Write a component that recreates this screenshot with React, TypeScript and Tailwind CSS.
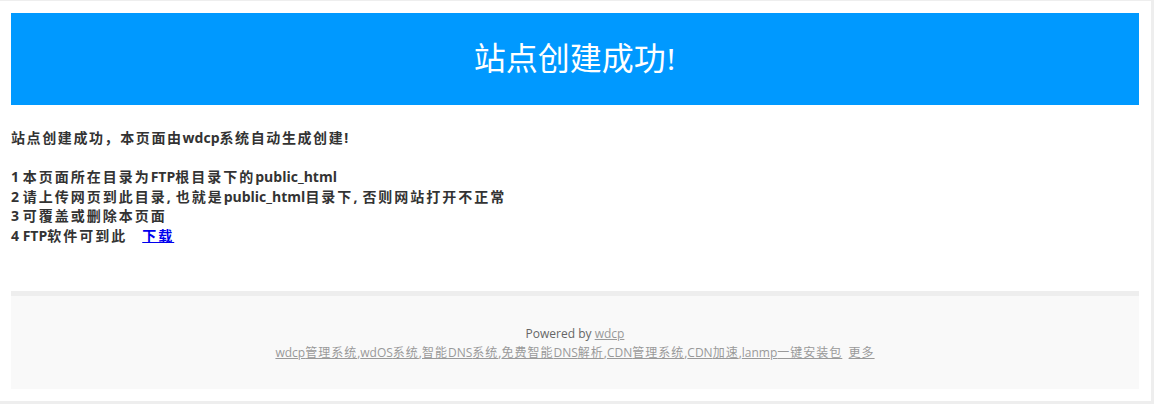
import React from "react";

const CJK_RE = /([\u3000-\u9fff\uff00-\uffef]+)/;
const CJK_TEST = /[\u3000-\u9fff\uff00-\uffef]/;

function Spaced({ text, cjkClass }: { text: string; cjkClass: string }) {
  const parts = text.split(CJK_RE);
  return (
    <>
      {parts.map((p, i) =>
        CJK_TEST.test(p) ? (
          <span key={i} className={cjkClass}>
            {p}
          </span>
        ) : (
          <React.Fragment key={i}>{p}</React.Fragment>
        )
      )}
    </>
  );
}

function Line({ text }: { text: string }) {
  const segs = text.split(",");
  return (
    <>
      {segs.map((s, i) => (
        <React.Fragment key={i}>
          <Spaced text={s} cjkClass="tracking-[2px]" />
          {i < segs.length - 1 ? <span className="mr-[5px]">,</span> : null}
        </React.Fragment>
      ))}
    </>
  );
}

export default function App() {
  const links = [
    "wdcp管理系统",
    "wdOS系统",
    "智能DNS系统",
    "免费智能DNS解析",
    "CDN管理系统",
    "CDN加速",
    "lanmp一键安装包",
  ];
  const lines = [
    "1 本页面所在目录为FTP根目录下的public_html",
    "2 请上传网页到此目录,也就是public_html目录下,否则网站打开不正常",
    "3 可覆盖或删除本页面",
  ];
  return (
    <div className="h-[404px] w-[1154px] bg-[#eeeeee] pt-px pr-[3px] pb-[3px]">
      <div className="h-[400px] bg-white pt-[12px] pl-[11px] pr-[12px] pb-[12px] flex flex-col">
        <div
          className="h-[92px] bg-[#0099ff] flex items-center justify-center text-white text-[32px]"
          style={{ fontFamily: '"Liberation Serif", "Noto Sans CJK SC", serif' }}
        >
          站点创建成功!
        </div>
        <div
          className="mt-[23px] text-[14px] leading-[1.4] font-bold text-[#333333]"
          style={{ fontFamily: '"Open Sans", "Noto Sans CJK SC", sans-serif' }}
        >
          <div>
            <Spaced text="站点创建成功，本页面由wdcp系统自动生成创建!" cjkClass="tracking-[1.6px]" />
          </div>
          <div className="h-[19.6px]"></div>
          {lines.map((l) => (
            <div key={l}>
              <Line text={l} />
            </div>
          ))}
          <div>
            <Line text="4 FTP软件可到此" />
            <a href="#" className="ml-[15px] text-[#0000ee] underline">
              <Spaced text="下载" cjkClass="tracking-[2px]" />
            </a>
          </div>
        </div>
        <div
          className="mt-auto border-t-[5px] border-[#eeeeee] bg-[#f9f9f9] pt-[28px] pb-[27px] text-center text-[12px] leading-[19.2px] text-[#666666]"
          style={{ fontFamily: '"Open Sans", "Noto Sans CJK SC", sans-serif' }}
        >
          <div>
            Powered by{" "}
            <a href="#" className="text-[#999999] underline">
              wdcp
            </a>
          </div>
          <div className="text-[#999999]">
            {links.map((l, i) => (
              <span key={l}>
                <a href="#" className="underline text-[#999999]">
                  <Spaced text={l} cjkClass="tracking-[1px]" />
                </a>
                {i < links.length - 1 ? "," : ""}
              </span>
            ))}
            &nbsp;&nbsp;
            <a href="#" className="underline text-[#999999]">
              <Spaced text="更多" cjkClass="tracking-[1px]" />
            </a>
          </div>
        </div>
      </div>
    </div>
  );
}
